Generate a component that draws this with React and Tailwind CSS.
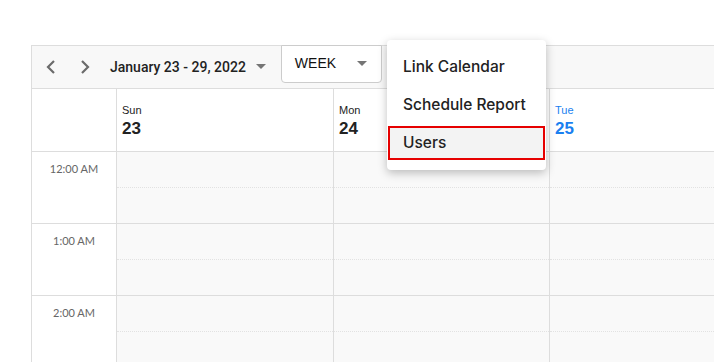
import React from 'react';

const hours = ['12:00 AM', '1:00 AM', '2:00 AM'];

const days = [
  { name: 'Sun', num: 23, w: 'w-[217px]' },
  { name: 'Mon', num: 24, w: 'w-[216px]' },
  { name: 'Tue', num: 25, w: 'flex-1', today: true },
];

const Caret = ({ className }) => (
  <svg width="10" height="6" viewBox="0 0 10 6" className={className}>
    <path d="M0 0h10L5 5z" fill="#757575" />
  </svg>
);

const Chevron = ({ dir }) => (
  <svg width="12" height="16" viewBox="0 0 12 16">
    <path
      d={dir === 'left' ? 'M9 2L3 8l6 6' : 'M3 2l6 6-6 6'}
      fill="none"
      stroke="#6b6b6b"
      strokeWidth="2.2"
    />
  </svg>
);

const App = () => {
  return (
    <div className="relative w-[714px] h-[362px] overflow-hidden bg-white font-['Liberation_Sans',sans-serif]">
      <div className="mt-[45px] ml-[31px] border-l border-[#ddd]">
        {/* toolbar */}
        <div className="h-[44px] border-t border-b border-[#ddd] bg-[#f8f8f8] flex items-start">
          <div className="flex items-center h-full pl-[13px]">
            <button className="w-[12px] h-[16px] flex items-center"><Chevron dir="left" /></button>
            <button className="ml-[22px] w-[12px] h-[16px] flex items-center"><Chevron dir="right" /></button>
            <span className="ml-[19px] text-[14px] font-medium text-[#222] font-['Roboto',sans-serif]">
              January 23 - 29, 2022
            </span>
            <Caret className="ml-[10px]" />
          </div>
          <div className="ml-[15px] -mt-px w-[101px] h-[38px] bg-white border border-[#ccc] rounded-b-[4px] flex items-center justify-between pl-[13px] pr-[14px]">
            <span className="text-[14px] text-[#111] -mt-[2px]">WEEK</span>
            <Caret />
          </div>
        </div>

        {/* header row */}
        <div className="flex h-[63px] border-b border-[#ddd]">
          <div className="w-[85px] border-r border-[#ddd]" />
          {days.map((d) => (
            <div key={d.name} className={`${d.w} ${d.today ? '' : 'border-r border-[#ddd]'} pl-[5px] pt-[14px]`}>
              <div className={`text-[11px] leading-[14px] ${d.today ? 'text-[#1a7ff0]' : 'text-[#222]'}`}>{d.name}</div>
              <div className={`text-[17px] leading-[20px] font-bold mt-[2px] ${d.today ? 'text-[#1a7ff0]' : 'text-[#222]'}`}>{d.num}</div>
            </div>
          ))}
        </div>

        {/* hour rows */}
        {hours.map((h) => (
          <div key={h} className="flex h-[72px] border-b border-[#ddd]">
            <div className="w-[85px] border-r border-[#ddd] bg-white text-center pt-[9px] text-[11px] text-[#666] font-['Lato',sans-serif]">
              {h}
            </div>
            {days.map((d) => (
              <div key={d.name} className={`${d.w} ${d.today ? '' : 'border-r border-[#ddd]'} bg-[#f9f9f9] flex flex-col`}>
                <div className="h-[36px] border-b border-dotted border-[#e2e2e2]" />
                <div className="flex-1" />
              </div>
            ))}
          </div>
        ))}
      </div>

      {/* dropdown menu */}
      <div className="absolute left-[387px] top-[40px] w-[159px] h-[130px] bg-white rounded-[4px] shadow-[0_3px_10px_rgba(0,0,0,0.25)] py-[8px] px-px font-['Inter',sans-serif] text-[15.5px] font-medium text-[#222]">
        <div className="h-[38px] flex items-center pl-[15px]">Link Calendar</div>
        <div className="h-[38px] flex items-center pl-[15px]">Schedule Report</div>
        <div className="mt-[2px] h-[34px] flex items-center pl-[13px] bg-[#f3f3f3] border-2 border-[#e60000]">Users</div>
      </div>
    </div>
  );
};

export default App;
